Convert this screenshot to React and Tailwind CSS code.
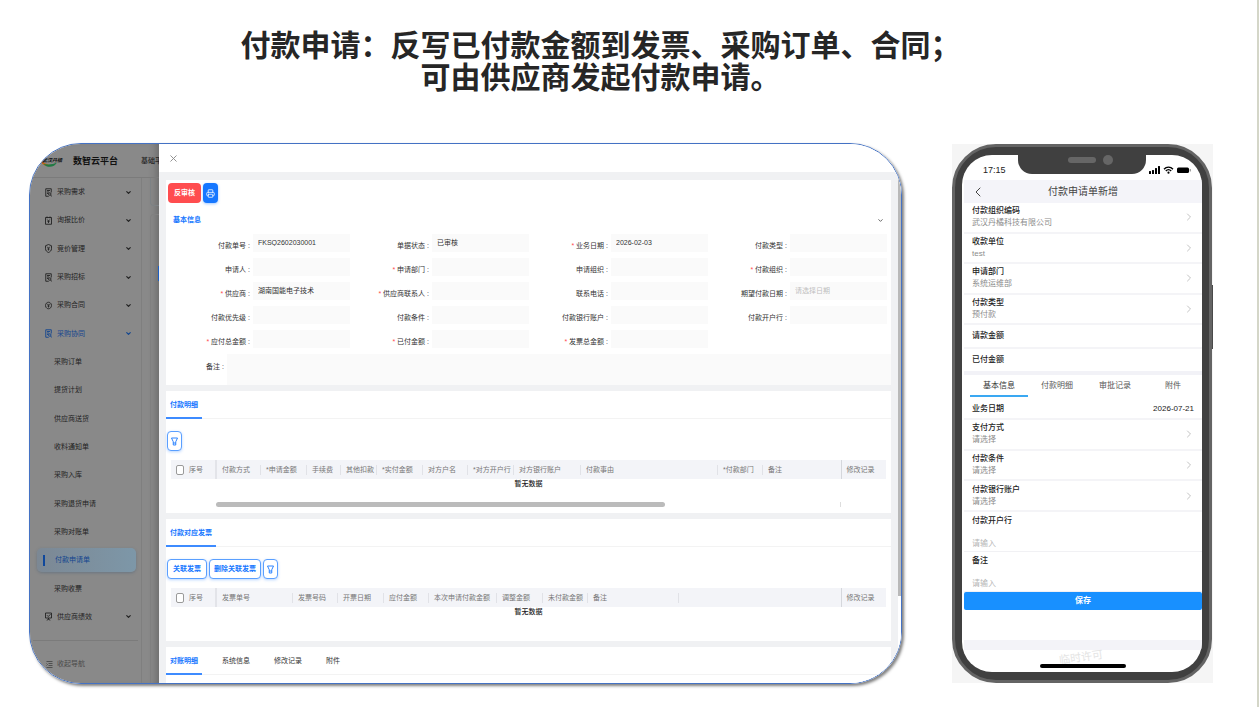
import { ChevronDown, ChevronLeft, ChevronRight, X, Printer } from 'lucide-react';

const menuTop = [
  { label: '采购需求', icon: 'doc' },
  { label: '询报比价', icon: 'calendar' },
  { label: '竞价管理', icon: 'shield' },
  { label: '采购招标', icon: 'doc' },
  { label: '采购合同', icon: 'coin' },
  { label: '采购协同', icon: 'doc', open: true },
];

const subMenu = [
  '采购订单',
  '提货计划',
  '供应商送货',
  '收料通知单',
  '采购入库',
  '采购退货申请',
  '采购对账单',
  '付款申请单',
  '采购收票',
];

const formFields = [
  { id: 'billNo', label: '付款单号', value: 'FKSQ2602030001' },
  { id: 'billStatus', label: '单据状态', value: '已审核' },
  { id: 'bizDate', label: '业务日期', value: '2026-02-03', required: true },
  { id: 'payType', label: '付款类型' },
  { id: 'applicant', label: '申请人' },
  { id: 'applyDept', label: '申请部门', required: true },
  { id: 'applyOrg', label: '申请组织' },
  { id: 'payOrg', label: '付款组织', required: true },
  { id: 'supplier', label: '供应商', value: '湖南国能电子技术', required: true },
  { id: 'contact', label: '供应商联系人', required: true },
  { id: 'phone', label: '联系电话' },
  { id: 'expectDate', label: '期望付款日期', placeholder: '请选择日期' },
  { id: 'priority', label: '付款优先级' },
  { id: 'payTerm', label: '付款条件' },
  { id: 'payAccount', label: '付款银行账户' },
  { id: 'payBank', label: '付款开户行' },
  { id: 'payable', label: '应付总金额', required: true },
  { id: 'paid', label: '已付金额', required: true },
  { id: 'invoiceTotal', label: '发票总金额', required: true },
];

const detailColumns = [
  { title: '付款方式', width: 45 },
  { title: '*申请金额', width: 46 },
  { title: '手续费', width: 34 },
  { title: '其他扣款', width: 36 },
  { title: '*实付金额', width: 46 },
  { title: '对方户名', width: 45 },
  { title: '*对方开户行', width: 46 },
  { title: '对方银行账户', width: 67 },
  { title: '付款事由', width: 137 },
  { title: '*付款部门', width: 45 },
  { title: '备注', width: 78, last: true },
];

const invoiceColumns = [
  { title: '发票单号', width: 77 },
  { title: '发票号码', width: 45 },
  { title: '开票日期', width: 46 },
  { title: '应付金额', width: 45 },
  { title: '本次申请付款金额', width: 68 },
  { title: '调整金额', width: 46 },
  { title: '未付款金额', width: 45 },
  { title: '备注', width: 91 },
  { title: '', width: 162, last: true },
];

const MenuIcon = ({ name }) => (
  <svg className="w-[7px] h-[9px] shrink-0" viewBox="0 0 14 18" fill="none" stroke="currentColor" strokeWidth="1.8">
    {name === 'doc' && (
      <>
        <path d="M12.5 9V1.5h-11v15h6" />
        <path d="M4 5h6M4 8h4M4 11h2" />
        <circle cx="9.5" cy="12" r="2.5" />
        <path d="M11.3 14l2 3" />
      </>
    )}
    {name === 'calendar' && (
      <>
        <path d="M1 3h12v13.5H1zM4 1v3.5M10 1v3.5" />
        <path d="M4.5 7L7 10l2.5-3M7 10v4M5 11h4" />
      </>
    )}
    {name === 'shield' && (
      <>
        <path d="M7 1l6 2.5v6c0 3.5-2.5 6-6 7.5-3.5-1.500-6-4-6-7.500v-6z" />
        <path d="M4.5 5.5L7 8.5l2.5-3M7 8.5v4.500M5 10h4" />
      </>
    )}
    {name === 'coin' && (
      <>
        <path d="M12.5 6.500C11.5 4 9.5 2.500 7 2.500c-3.300 0-6 2.900-6 6.500 0 1 .2 2 .6 2.800M1.500 11.500C2.500 14 4.500 15.500 7 15.500c3.300 0 6-2.900 6-6.500 0-1-.2-2-.6-2.800" />
        <path d="M4.5 5.5L7 8.5l2.5-3M7 8.5v4.500M5 10h4" />
      </>
    )}
    {name === 'board' && (
      <>
        <path d="M1 2h12v10H1zM7 12v3M3.5 16.500L7 14.500l3.500 2" />
        <path d="M4 6.5l2.500 2.500L11 4.500" />
      </>
    )}
    {name === 'fold' && <path d="M1 3h12M5 7h8M5 11h8M1 15h12M1 7l2 2-2 2" />}
  </svg>
);

const FilterIcon = () => (
  <svg className="w-[7px] h-[9px]" viewBox="0 0 14 18" fill="none" stroke="currentColor" strokeWidth="1.8">
    <path d="M1 2h12L9.500 9.500V16h-5V9.500zM4.500 12h5" />
  </svg>
);

function Sidebar() {
  return (
    <div className="w-[129px] shrink-0 flex flex-col bg-[#898989] text-[#222] shadow-[inset_-8px_0_8px_-6px_rgba(0,0,0,0.25)]">
      <header className="h-[34px] pl-[10px] flex items-center gap-[12px] overflow-hidden whitespace-nowrap border-b border-[#7b7b7b]">
        <span className="relative w-[21px] h-[14px] shrink-0">
          <svg className="w-full h-full" viewBox="0 0 42 28" fill="none">
            <path d="M2 6c-1 10 6 17 15 16" stroke="#c0661a" strokeWidth="4" />
            <path d="M7 20c8 9 22 7 27-3-7 4-18 5-27 3z" fill="#1f7a42" />
          </svg>
          <span className="absolute left-[2px] top-[3px] text-[5px] leading-[6px] font-bold italic text-[#111]">武汉丹橘</span>
        </span>
        <h2 className="text-[9px] leading-[12px] font-bold text-[#111]">数智云平台</h2>
        <span className="ml-[11px] text-[7px] leading-[10px] font-medium">基础平台</span>
      </header>

      <div className="flex-1 flex">
        <aside className="w-[112px] flex flex-col border-r border-[#7f7f7f]">
          <nav className="flex-1 flex flex-col text-[7px] leading-[10px]">
            {menuTop.map((item) => (
              <a
                key={item.label}
                href="#"
                className={`flex-1 flex items-center gap-[5px] pl-[15px] pr-[9px] ${item.open ? 'text-[#12458f]' : ''}`}
              >
                <MenuIcon name={item.icon} />
                <span className="flex-1">{item.label}</span>
                <ChevronDown size={7} strokeWidth={4} />
              </a>
            ))}
            {subMenu.map((label) =>
              label === '付款申请单' ? (
                <a key={label} href="#" className="flex-1 flex items-center pl-[7px] pr-[5px] text-[#12458f]">
                  <span className="flex-1 h-6 flex items-center gap-[10px] pl-[6px] rounded-[5px] bg-linear-to-r from-[#7c8894] to-[#7d97a8] shadow-[0_1px_3px_rgba(60,90,120,0.4)]">
                    <span className="w-[2px] h-[11px] bg-[#0f489c]"></span>
                    {label}
                  </span>
                </a>
              ) : (
                <a key={label} href="#" className="flex-1 flex items-center pl-6">
                  {label}
                </a>
              )
            )}
            <a href="#" className="flex-1 flex items-center gap-[5px] pl-[15px] pr-[9px]">
              <MenuIcon name="board" />
              <span className="flex-1">供应商绩效</span>
              <ChevronDown size={7} strokeWidth={4} />
            </a>
          </nav>
          <div className="h-[43px] mt-[9px] mx-[3px] border-t border-[#7b7b7b]">
            <button className="mt-[18px] ml-[13px] flex items-center gap-1 text-[7px] leading-[10px] text-[#4a4a4a]">
              <MenuIcon name="fold" />
              收起导航
            </button>
          </div>
        </aside>
        <div className="flex-1 flex flex-col gap-2 pl-2">
          <div className="h-[28px] rounded-bl-[4px] border-l border-b border-[#7d8285]"></div>
          <div className="flex-1 rounded-tl-[4px] border-l border-t border-[#808080]">
            <div className="mt-[51px] ml-auto w-px h-[15px] bg-[#1d5fc4]"></div>
          </div>
        </div>
      </div>
    </div>
  );
}

const Field = ({ field }) => (
  <div className="flex gap-[3px]">
    <label htmlFor={field.id} className="flex-1 pt-[7px] text-right text-[#333] whitespace-nowrap">
      {field.required && <span className="text-[#ff4d4f]">* </span>}
      {field.label} :
    </label>
    <input
      id={field.id}
      className="w-[97px] h-[18px] px-[5px] pb-[2px] bg-[#fafafa] text-[#333] placeholder:text-[#bfbfbf] focus:outline-none"
      defaultValue={field.value}
      placeholder={field.placeholder}
    />
  </div>
);

const Tabs = ({ items }) => (
  <div className="h-[28px] flex gap-4 border-b border-[#f3f3f3]">
    {items.map((item, idx) => (
      <button
        key={item}
        className={`h-[28px] px-1 pt-[2px] border-b-2 ${idx === 0 ? 'border-[#3d8bff] text-[#1677ff] font-bold' : 'border-transparent text-[#333]'}`}
      >
        {item}
      </button>
    ))}
  </div>
);

const OutlineButton = ({ children, label }) => (
  <button
    aria-label={label}
    className="h-[20px] min-w-[15px] px-[3px] flex items-center justify-center rounded-[4px] border border-[#5a9fff] bg-white font-bold text-[#1677ff] shadow-[0_1px_3px_rgba(22,119,255,0.3)]"
  >
    {children}
  </button>
);

function DataTable({ columns, name }) {
  const total = columns.reduce((sum, col) => sum + col.width, 90);
  const pct = (w) => ({ width: `${(w / total) * 100}%` });

  return (
    <table className="w-full table-fixed border-collapse text-left text-[#777] whitespace-nowrap">
      <thead className="bg-[#f3f4f8]">
        <tr className="h-[19px]">
          <th style={pct(45)} className="p-0 font-normal border-r-2 border-[#e3e4e9]">
            <label className="flex items-center gap-[5px] pl-[5px]">
              <input
                type="checkbox"
                name={name}
                className="appearance-none w-2 h-[10px] rounded-[2px] border border-[#9a9a9a] bg-white checked:bg-[#1677ff]"
              />
              序号
            </label>
          </th>
          {columns.map((col) => (
            <th key={col.title} style={pct(col.width)} className={`p-0 font-normal ${col.last ? 'border-r border-[#d5d7dc]' : ''}`}>
              <div className={`h-[10px] pl-[5px] ${col.last ? '' : 'border-r border-[#e1e2e7]'}`}>{col.title}</div>
            </th>
          ))}
          <th style={pct(45)} className="p-0 pl-[5px] font-normal">修改记录</th>
        </tr>
      </thead>
      <tbody>
        <tr>
          <td colSpan={columns.length + 2} className="p-0 text-center font-medium text-[#222]">暂无数据</td>
        </tr>
      </tbody>
    </table>
  );
}

function Drawer() {
  return (
    <section className="flex-1 min-w-0 flex flex-col bg-white text-[7px] leading-[10px]">
      <div className="h-7 px-[9px] flex items-center">
        <button aria-label="关闭" className="text-[#8a8a8a]">
          <X size={11} strokeWidth={2} />
        </button>
      </div>
      <div className="flex-1 flex bg-[#f0f1f3]">
        <div className="flex-1 min-w-0 px-[7px] pt-2 flex flex-col gap-[6px]">
          {/* basic info */}
          <div className="bg-white pt-[3px]">
            <div className="px-[2px] flex gap-[2px]">
              <button className="h-[20px] px-[6px] rounded-[4px] bg-[#ff4d4f] font-bold text-white">反审核</button>
              <button aria-label="打印" className="w-[15px] h-[20px] flex items-center justify-center rounded-[4px] bg-[#1677ff] text-white shadow-[0_1px_3px_rgba(22,119,255,0.4)]">
                <Printer size={9} strokeWidth={2} />
              </button>
            </div>
            <div className="mt-3 px-[7px] flex items-center justify-between">
              <h3 className="font-bold text-[#1677ff]">基本信息</h3>
              <ChevronDown size={7} strokeWidth={3} className="text-[#555]" />
            </div>
            <div className="mt-[9px] pl-[5px] pr-1 grid grid-cols-4 gap-y-[6px]">
              {formFields.map((field) => (
                <Field key={field.id} field={field} />
              ))}
            </div>
            <div className="mt-[6px] flex gap-[3px]">
              <label htmlFor="remark" className="w-[58px] pt-[8px] text-right text-[#333]">备注 :</label>
              <textarea id="remark" className="flex-1 h-[31px] block resize-none bg-[#fafafa] focus:outline-none"></textarea>
            </div>
          </div>

          {/* payment detail */}
          <div className="bg-white">
            <Tabs items={['付款明细']} />
            <div className="px-px pt-[12px] flex">
              <OutlineButton label="筛选"><FilterIcon /></OutlineButton>
            </div>
            <div className="px-[5px] pt-[9px] pb-[6px]">
              <DataTable columns={detailColumns} name="detailAll" />
              <div className="mt-[13px] mx-[45px] border-r border-[#ddd]">
                <div className="w-[72%] h-[5px] rounded-full bg-[#bbbbbb]"></div>
              </div>
            </div>
          </div>

          {/* invoices */}
          <div className="bg-white">
            <Tabs items={['付款对应发票']} />
            <div className="px-px pt-[12px] flex gap-[2px]">
              <OutlineButton><span className="px-[2px]">关联发票</span></OutlineButton>
              <OutlineButton><span className="px-px">删除关联发票</span></OutlineButton>
              <OutlineButton label="筛选"><FilterIcon /></OutlineButton>
            </div>
            <div className="px-[5px] pt-[9px] pb-6">
              <DataTable columns={invoiceColumns} name="invoiceAll" />
            </div>
          </div>

          <div className="flex-1 bg-white pb-[8px]">
            <Tabs items={['对账明细', '系统信息', '修改记录', '附件']} />
          </div>
        </div>
        <div className="w-[3px] bg-white">
          <div className="h-[83%] bg-[#b9b9b9]"></div>
        </div>
      </div>
    </section>
  );
}

const PickerRow = ({ label, value }) => (
  <button className="w-full pl-2 pr-[9px] flex items-center justify-between text-left border-b-2 border-[#f4f4f7]">
    <span className="flex flex-col">
      <span className="text-[#222] font-medium">{label}</span>
      <span className="text-[#8c8c8c]">{value}</span>
    </span>
    <ChevronRight size={12} strokeWidth={2} className="text-[#c4c4c4] -mr-[2px]" />
  </button>
);

const InputRow = ({ id, label }) => (
  <div className="h-10 pl-2 pt-[3px] flex flex-col gap-[11px] border-b border-[#f1f1f4]">
    <label htmlFor={id} className="text-[#222] font-medium">{label}</label>
    <input id={id} placeholder="请输入" className="h-3 placeholder:text-[#b5b5b5] focus:outline-none" />
  </div>
);

function Phone() {
  return (
    <div className="relative w-[261px] shrink-0 pr-px bg-[#f5f5f5]">
      <div className="absolute right-0 top-[141px] w-[3px] h-16 bg-[#4a4a4a]"></div>
      <div className="relative rounded-[44px] border-3 border-[#646464] bg-[#404040] py-[8px] px-[7px]">
        <div className="relative rounded-[30px] overflow-hidden bg-white pl-[2px] text-[8px] leading-[12px]">
          {/* notch */}
          <div className="absolute left-[56px] top-0 w-32 h-[19px] rounded-b-[14px] bg-[#404040]">
            <span className="absolute left-[50px] top-[2px] w-7 h-[6px] rounded-full bg-[#666]"></span>
            <span className="absolute left-[85px] top-0 w-[10px] h-[10px] rounded-full bg-[#666]"></span>
          </div>
          <div className="h-[25px] pl-[19px] pr-[11px] pt-1 flex items-center justify-between text-[#222]">
            <span className="text-[9px]">17:15</span>
            <svg className="w-[43px] h-[8px]" viewBox="0 0 43 8" fill="#000">
              <rect x="1" y="5" width="2" height="3" rx="0.5" />
              <rect x="4" y="4" width="2" height="4" rx="0.5" />
              <rect x="7" y="2" width="2" height="6" rx="0.5" />
              <rect x="10" y="0" width="2" height="8" rx="0.5" />
              <path d="M16 3.200C18.500.4 22.500.4 25 3.200M17.800 5C19.500 3.200 21.500 3.200 23.200 5" fill="none" stroke="#000" strokeWidth="1.400" />
              <circle cx="20.5" cy="6.7" r="1.1" />
              <rect x="29" y="1.5" width="12" height="5.5" rx="1.5" />
              <rect x="41.7" y="3" width="1" height="2.5" rx="0.5" fill="#777" />
            </svg>
          </div>
          <div className="h-[23px] px-[6px] grid grid-cols-[16px_1fr_16px] items-center bg-[#f4f4f9] text-[#444]">
            <button aria-label="返回">
              <ChevronLeft size={16} strokeWidth={1.5} />
            </button>
            <h2 className="text-center text-[10px]">付款申请单新增</h2>
          </div>

          <div className="grid auto-rows-fr min-h-[122px]">
            <PickerRow label="付款组织编码" value="武汉丹橘科技有限公司" />
            <PickerRow label="收款单位" value="test" />
            <PickerRow label="申请部门" value="系统运维部" />
            <PickerRow label="付款类型" value="预付款" />
          </div>
          <div className="h-6 pl-2 flex items-center border-b-2 border-[#f4f4f7] text-[#222] font-medium">请款金额</div>
          <div className="h-[26px] pl-2 flex items-center border-b-4 border-[#f2f2f7] text-[#222] font-medium">已付金额</div>

          <div className="h-[22px] pl-[6px] grid grid-cols-4 text-[#555]">
            <button className="pt-[2px] border-b-2 border-[#3aa8f2] text-[#333]">基本信息</button>
            <button className="pt-[2px] border-b-2 border-transparent">付款明细</button>
            <button className="pt-[2px] border-b-2 border-transparent">审批记录</button>
            <button className="pt-[2px] border-b-2 border-transparent">附件</button>
          </div>
          <div className="h-[23px] pl-2 pr-2 pt-[2px] flex items-center justify-between border-b-2 border-[#f4f4f7] text-[#222] font-medium">
            <span>业务日期</span>
            <span className="font-normal">2026-07-21</span>
          </div>
          <div className="grid auto-rows-fr min-h-[92px]">
            <PickerRow label="支付方式" value="请选择" />
            <PickerRow label="付款条件" value="请选择" />
            <PickerRow label="付款银行账户" value="请选择" />
          </div>
          <InputRow id="mBank" label="付款开户行" />
          <InputRow id="mRemark" label="备注" />
          <button className="block w-full h-[18px] rounded-[2px] bg-[#1890ff] font-bold text-white">保存</button>
          <div className="mt-[30px] h-[10px] bg-[#f3f3f8]"></div>
          <div className="relative h-[22px] flex justify-center items-end pb-[4px]">
            <span className="absolute left-[95px] top-0 -rotate-8 text-[11px] leading-[14px] text-[#e4e4e4]">临时许可</span>
            <span className="relative w-[86px] h-[4px] rounded-full bg-black"></span>
          </div>
        </div>
      </div>
    </div>
  );
}

export default function App() {
  return (
    <main className="min-h-screen bg-white border-r-2 border-[#d4d6c8] pt-[30px] pb-5 font-['Liberation_Sans','Noto_Sans_CJK_SC',sans-serif]">
      <h1 className="pr-14 text-center text-[30px] leading-8 font-bold text-[#262626]">
        付款申请：反写已付款金额到发票、采购订单、合同；
        <br />
        可由供应商发起付款申请。
      </h1>
      <div className="mt-[49px] pl-[29px] pr-11 flex items-center gap-[50px]">
        <div className="flex-1 min-w-0 flex overflow-hidden rounded-[52px] border border-[#4472c4] shadow-[2px_2px_3px_rgba(0,0,0,0.5)]">
          <Sidebar />
          <Drawer />
        </div>
        <Phone />
      </div>
    </main>
  );
}
